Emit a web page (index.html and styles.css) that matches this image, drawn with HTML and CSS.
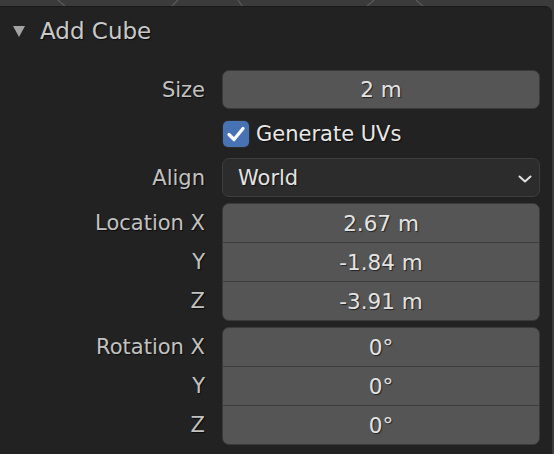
FILE: index.html
```html
<!DOCTYPE html>
<html>
<head>
<meta charset="utf-8">
<link rel="stylesheet" href="styles.css">
</head>
<body>
<div class="viewport">
  <svg class="grid" width="554" height="7" viewBox="0 0 554 7">
    <g stroke="#5a5a5a" stroke-width="1.2" fill="none">
      <line x1="58" y1="0" x2="66" y2="7"/>
      <line x1="178" y1="0" x2="171" y2="7"/>
      <line x1="238" y1="0" x2="243" y2="7"/>
      <line x1="374" y1="0" x2="366" y2="7"/>
      <line x1="416" y1="0" x2="424" y2="7"/>
    </g>
  </svg>
</div>
<div class="panel">
  <div class="header">
    <svg class="tri" width="12" height="11" viewBox="0 0 12 11"><path d="M0 0 L12 0 L6 11 Z" fill="#a3a3a3"/></svg>
    <span class="title">Add Cube</span>
  </div>
  <div class="content">
    <div class="row">
      <div class="label">Size</div>
      <div class="field single">2 m</div>
    </div>
    <div class="row check-row">
      <div class="label"></div>
      <div class="check">
        <span class="box"><svg width="26" height="26" viewBox="0 0 26 26"><path d="M6 13.5 L11 18.5 L20 7.5" stroke="#fff" stroke-width="3.2" fill="none" stroke-linecap="round" stroke-linejoin="round"/></svg></span>
        <span class="check-label">Generate UVs</span>
      </div>
    </div>
    <div class="row">
      <div class="label">Align</div>
      <div class="dropdown">
        <span>World</span>
        <svg class="chev" width="14" height="8" viewBox="0 0 14 8"><path d="M1.5 1.5 L7 6.5 L12.5 1.5" stroke="#e0e0e0" stroke-width="2" fill="none" stroke-linecap="round" stroke-linejoin="round"/></svg>
      </div>
    </div>
    <div class="group">
      <div class="labels">
        <div class="label">Location X</div>
        <div class="label">Y</div>
        <div class="label">Z</div>
      </div>
      <div class="stack">
        <div class="cell">2.67 m</div>
        <div class="cell">-1.84 m</div>
        <div class="cell">-3.91 m</div>
      </div>
    </div>
    <div class="group">
      <div class="labels">
        <div class="label">Rotation X</div>
        <div class="label">Y</div>
        <div class="label">Z</div>
      </div>
      <div class="stack">
        <div class="cell">0°</div>
        <div class="cell">0°</div>
        <div class="cell">0°</div>
      </div>
    </div>
  </div>
</div>
</body>
</html>
```

FILE: styles.css
```css
html, body {
  margin: 0;
  padding: 0;
  width: 554px;
  height: 454px;
  overflow: hidden;
  background: #3b3b3b;
  font-family: "DejaVu Sans", sans-serif;
}
.viewport {
  height: 6px;
  background: #3b3b3b;
  overflow: hidden;
}
.grid {
  display: block;
}
.panel {
  margin-right: 2px;
  height: 448px;
  background: #222222;
  border-top: 1px solid #1a1a1a;
  border-top-right-radius: 7px;
  box-sizing: border-box;
}
.header {
  height: 48px;
  display: flex;
  align-items: center;
  padding-left: 13px;
  box-sizing: border-box;
}
.tri {
  display: block;
  margin-right: 15px;
  margin-top: 0;
}
.title {
  font-size: 23px;
  color: #c9c9c9;
  text-shadow: 1px 1px 1px rgba(0,0,0,0.7);
}
.content {
  padding-top: 15px;
  padding-right: 12px;
}
.row {
  display: grid;
  grid-template-columns: 222px 318px;
  align-items: center;
}
.label {
  font-size: 21px;
  color: #c2c2c2;
  text-align: right;
  padding-right: 17px;
  text-shadow: 1px 1px 1px rgba(0,0,0,0.7);
}
.field {
  height: 39px;
  box-sizing: border-box;
  background: #555555;
  border: 1px solid #3a3a3a;
  border-radius: 7px;
  display: flex;
  align-items: center;
  justify-content: center;
  font-size: 21.5px;
  color: #e3e3e3;
  text-shadow: 1px 1px 1px rgba(0,0,0,0.6);
}
.check-row {
  height: 49px;
}
.check {
  display: flex;
  align-items: center;
  padding-left: 1px;
}
.box {
  width: 26px;
  height: 26px;
  box-sizing: border-box;
  border-radius: 5px;
  background: #4772b3;
  box-shadow: 0 0 0 1px #2b2b2b;
  display: flex;
  align-items: center;
  justify-content: center;
  margin-right: 7px;
}
.box svg {
  display: block;
}
.check-label {
  font-size: 21px;
  color: #e8e8e8;
  text-shadow: 1px 1px 1px rgba(0,0,0,0.7);
}
.dropdown {
  height: 39px;
  box-sizing: border-box;
  background: #2c2c2c;
  border: 1px solid #3d3d3d;
  border-radius: 7px;
  display: flex;
  align-items: center;
  justify-content: space-between;
  padding-left: 15px;
  padding-right: 7px;
  font-size: 21px;
  color: #e3e3e3;
  text-shadow: 1px 1px 1px rgba(0,0,0,0.6);
}
.chev {
  display: block;
  margin-top: 2px;
}
.group {
  display: grid;
  grid-template-columns: 222px 318px;
  margin-top: 6px;
}
.labels {
  display: flex;
  flex-direction: column;
  padding-top: 1px;
}
.labels .label {
  height: 39px;
  line-height: 39px;
}
.stack {
  border: 1px solid #3a3a3a;
  border-radius: 7px;
  overflow: hidden;
  background: #555555;
}
.cell {
  height: 38px;
  display: flex;
  align-items: center;
  justify-content: center;
  font-size: 21.5px;
  color: #e3e3e3;
  text-shadow: 1px 1px 1px rgba(0,0,0,0.6);
}
.cell + .cell {
  border-top: 1px solid #3d3d3d;
}
```
